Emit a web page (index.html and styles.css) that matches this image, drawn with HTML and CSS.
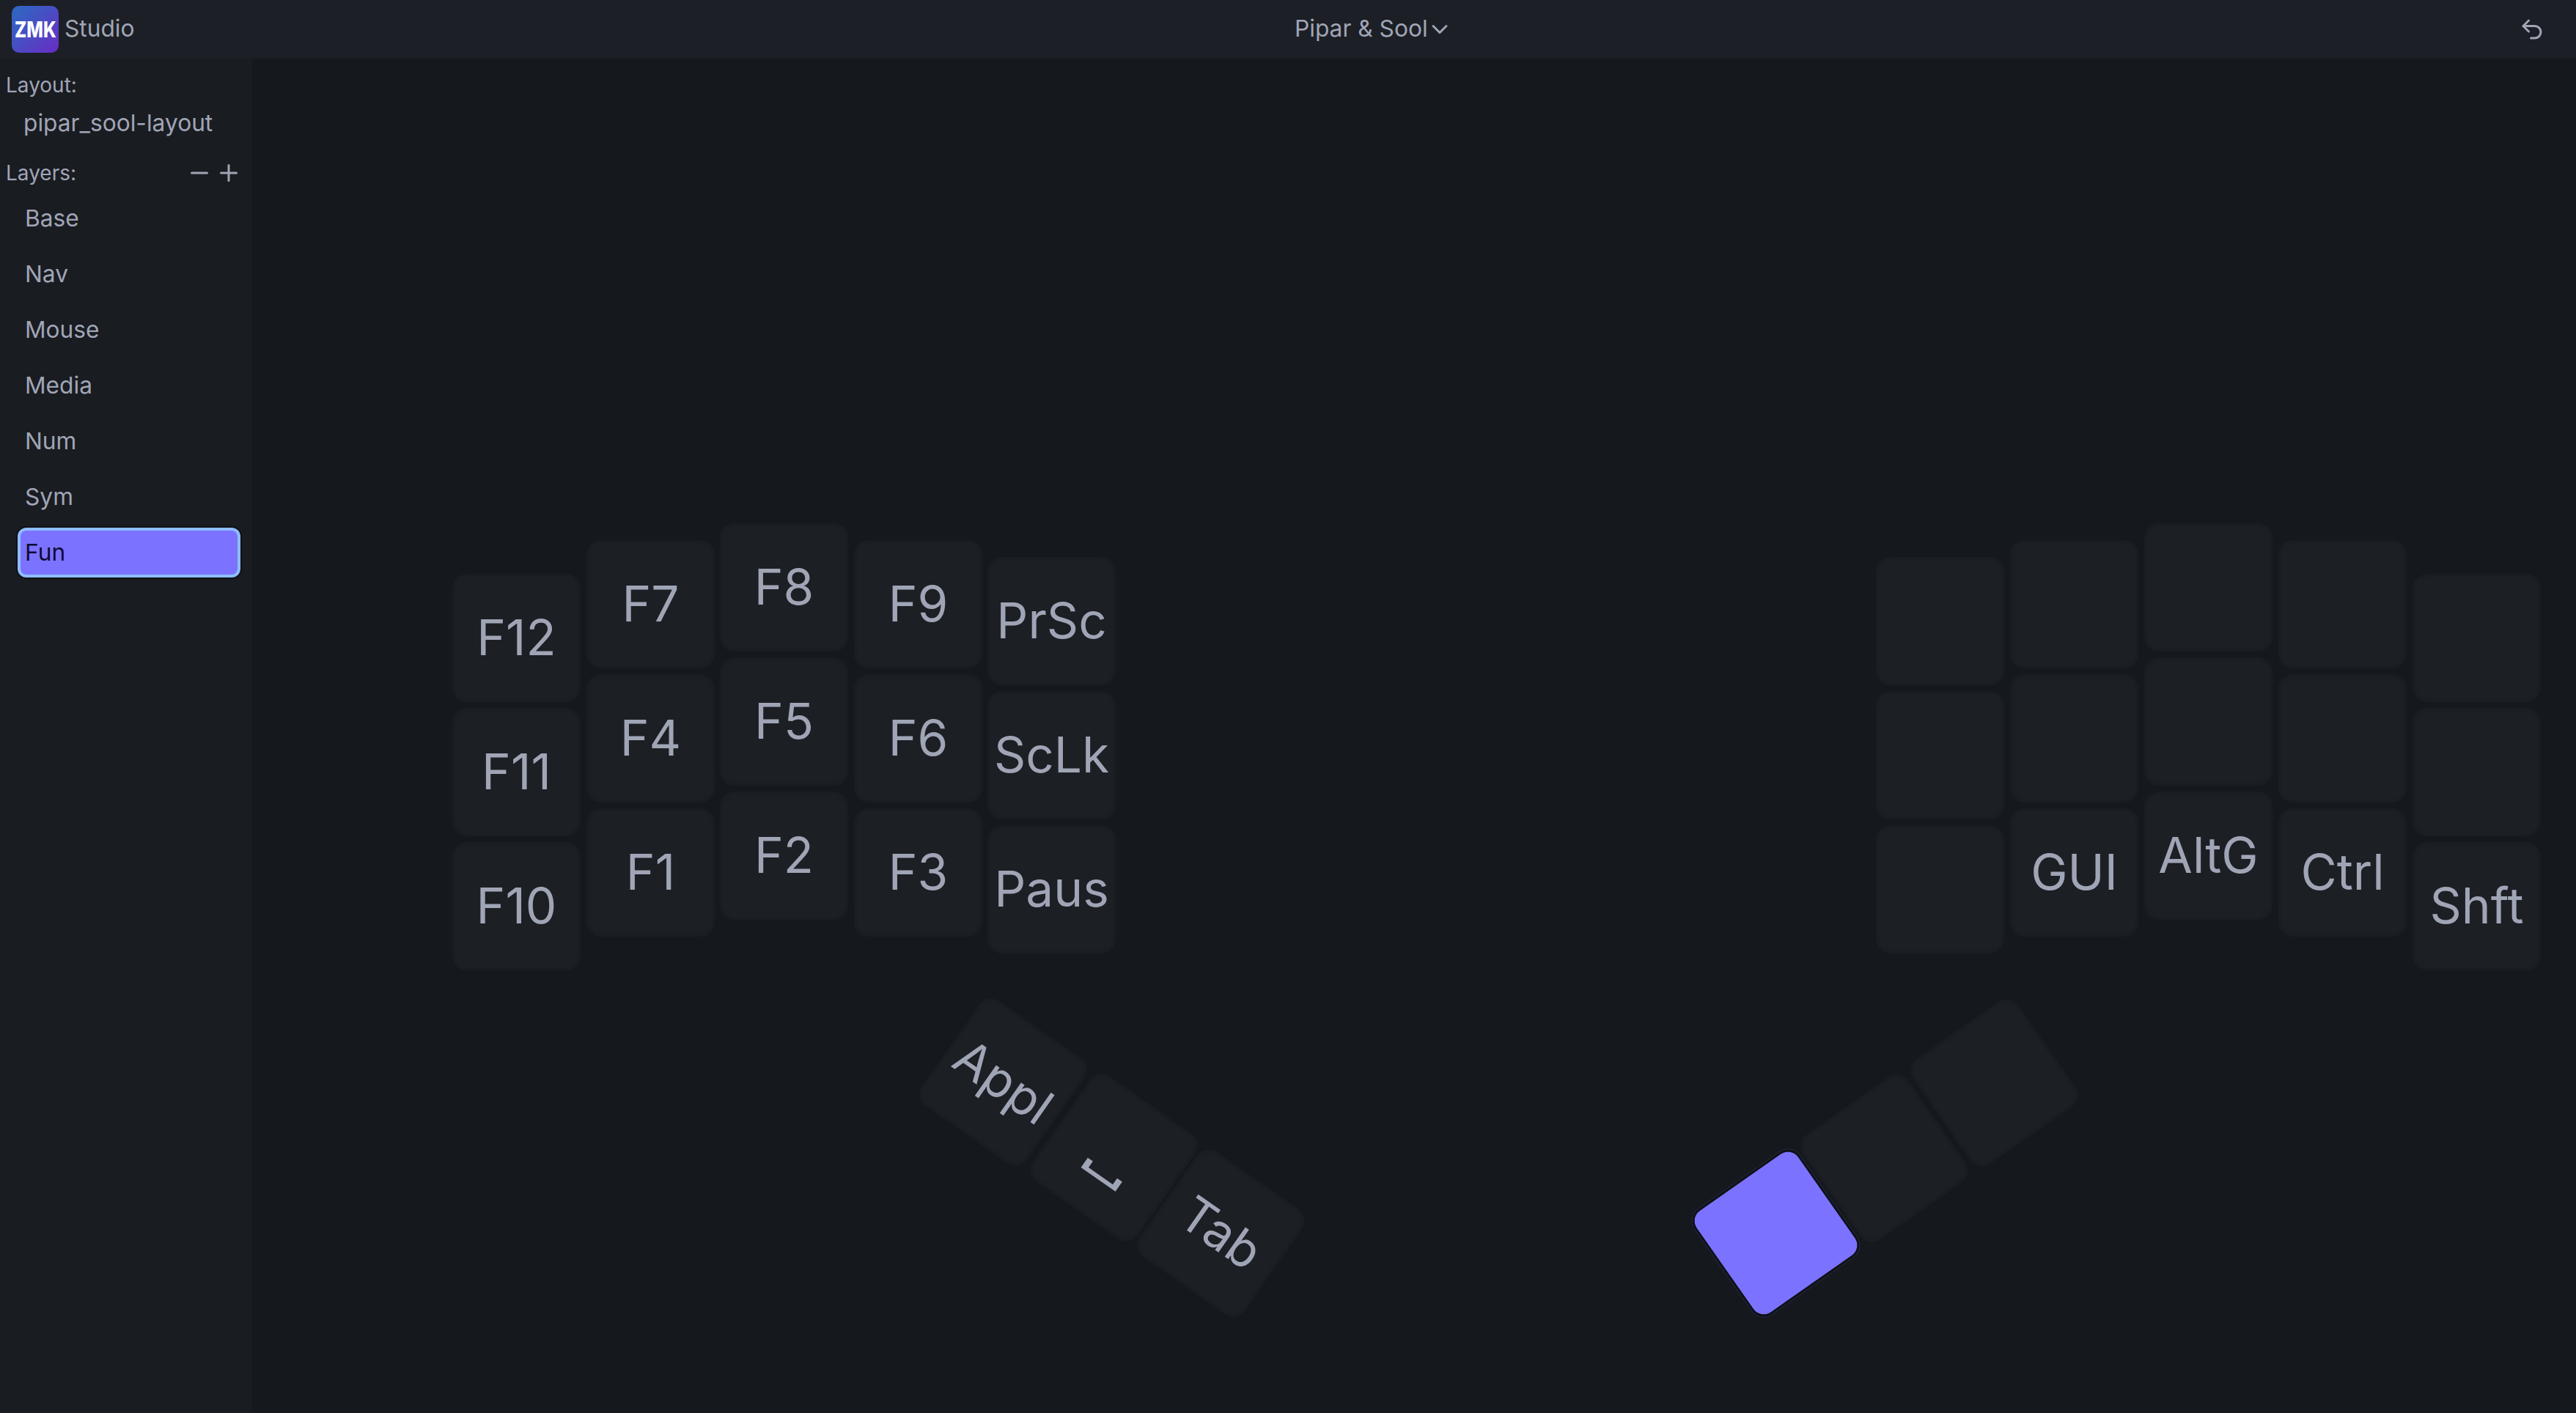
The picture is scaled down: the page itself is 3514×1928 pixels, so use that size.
FILE: index.html
```html
<!DOCTYPE html>
<html lang="en">
<head>
    <meta charset="UTF-8">
    <title>ZMK Studio</title>
    <link rel="stylesheet" href="styles.css">
</head>
<body>
    <header class="topbar">
        <div class="brand">
            <span class="logo"><span class="logo-text">ZMK</span></span>
            <span class="bar-text">Studio</span>
        </div>
        <div class="device">
            <span class="bar-text">Pipar &amp; Sool</span>
            <svg class="icon chevron" viewBox="0 0 24 24"><path d="m6 9 6 6 6-6"/></svg>
        </div>
        <div class="actions">
            <svg class="icon" viewBox="0 0 24 24"><path d="M9 14 4 9l5-5"/><path d="M4 9h10.5a5.5 5.5 0 0 1 0 11H11"/></svg>
        </div>
    </header>
    <div class="app">
        <aside class="sidebar">
            <div class="label">Layout:</div>
            <div class="layout-name">pipar_sool-layout</div>
            <div class="label layers-head">
                <span>Layers:</span>
                <span class="layer-btns">
                    <svg class="icon" viewBox="0 0 24 24"><path d="M5 12h14"/></svg>
                    <svg class="icon" viewBox="0 0 24 24"><path d="M5 12h14"/><path d="M12 5v14"/></svg>
                </span>
            </div>
            <ul class="layers">
                <li>Base</li>
                <li>Nav</li>
                <li>Mouse</li>
                <li>Media</li>
                <li>Num</li>
                <li>Sym</li>
                <li class="selected">Fun</li>
            </ul>
        </aside>
        <main class="canvas">
            <div class="keymap">
                <!-- left hand -->
                <div class="key" style="left:0;top:69px">F12</div>
                <div class="key" style="left:183px;top:23px">F7</div>
                <div class="key" style="left:365px;top:0">F8</div>
                <div class="key" style="left:548px;top:23px">F9</div>
                <div class="key" style="left:730px;top:46px">PrSc</div>
                <div class="key" style="left:0;top:252px">F11</div>
                <div class="key" style="left:183px;top:206px">F4</div>
                <div class="key" style="left:365px;top:183px">F5</div>
                <div class="key" style="left:548px;top:206px">F6</div>
                <div class="key" style="left:730px;top:229px">ScLk</div>
                <div class="key" style="left:0;top:435px">F10</div>
                <div class="key" style="left:183px;top:389px">F1</div>
                <div class="key" style="left:365px;top:366px">F2</div>
                <div class="key" style="left:548px;top:389px">F3</div>
                <div class="key" style="left:730px;top:412px">Paus</div>
                <!-- right hand -->
                <div class="key" style="left:1942px;top:46px"></div>
                <div class="key" style="left:2125px;top:23px"></div>
                <div class="key" style="left:2308px;top:0"></div>
                <div class="key" style="left:2491px;top:23px"></div>
                <div class="key" style="left:2674px;top:69px"></div>
                <div class="key" style="left:1942px;top:229px"></div>
                <div class="key" style="left:2125px;top:206px"></div>
                <div class="key" style="left:2308px;top:183px"></div>
                <div class="key" style="left:2491px;top:206px"></div>
                <div class="key" style="left:2674px;top:252px"></div>
                <div class="key" style="left:1942px;top:412px"></div>
                <div class="key" style="left:2125px;top:389px">GUI</div>
                <div class="key" style="left:2308px;top:366px">AltG</div>
                <div class="key" style="left:2491px;top:389px">Ctrl</div>
                <div class="key" style="left:2674px;top:435px">Shft</div>
                <!-- thumbs -->
                <div class="key thumb-l" style="left:664px;top:675px">Appl</div>
                <div class="key thumb-l" style="left:815px;top:778px"><span class="glyph">␣</span></div>
                <div class="key thumb-l" style="left:961px;top:881px">Tab</div>
                <div class="key thumb-r selected" style="left:1718px;top:881px"></div>
                <div class="key thumb-r" style="left:1866px;top:779px"></div>
                <div class="key thumb-r" style="left:2016px;top:676px"></div>
            </div>
        </main>
    </div>
</body>
</html>
```

FILE: styles.css
```css
* {
    box-sizing: border-box;
}

body {
    margin: 0;
    height: 1928px;
    overflow: hidden;
    background-color: #15181c;
    color: #a0a5b6;
    font-family: Inter, "Noto Sans", sans-serif;
    font-size: 31.7px;
    display: flex;
    flex-direction: column;
}

.icon {
    width: 36px;
    height: 36px;
    fill: none;
    stroke: currentColor;
    stroke-width: 2;
    stroke-linecap: round;
    stroke-linejoin: round;
}

/* top bar */
.topbar {
    height: 80px;
    flex: none;
    display: grid;
    grid-template-columns: 1750px auto 1fr;
    align-items: center;
    background-color: #1c1f25;
    padding: 0 42px 0 16px;
}

.brand {
    display: flex;
    align-items: center;
    gap: 8px;
}

.bar-text {
    padding-bottom: 3px;
}

.logo {
    width: 64px;
    height: 64px;
    border-radius: 10px;
    background: linear-gradient(135deg, #2a6bc2, #6a2cc4);
    color: #fff;
    display: flex;
    align-items: center;
    justify-content: center;
}

.logo-text {
    font-size: 30px;
    font-weight: 800;
    transform: scaleX(0.8);
}

.device {
    display: flex;
    align-items: center;
}

.chevron {
    margin-left: -2px;
}

.actions {
    display: flex;
    justify-content: flex-end;
}

/* sidebar */
.app {
    flex: 1;
    display: flex;
    min-height: 0;
}

.sidebar {
    width: 344px;
    flex: none;
    background-color: #191c21;
    padding: 16px 8px 0;
}

.label {
    font-size: 28px;
    line-height: 40px;
}

.layout-name {
    padding-left: 24px;
    margin-top: 12px;
    line-height: 40px;
}

.layers-head {
    display: flex;
    justify-content: space-between;
    align-items: center;
    margin-top: 28px;
    padding-right: 6px;
}

.layer-btns {
    display: flex;
    gap: 4px;
}

.layers {
    list-style: none;
    margin: 12px 0 0;
    padding: 0 12px 0 20px;
    display: flex;
    flex-direction: column;
    gap: 16px;
}

.layers li {
    height: 60px;
    line-height: 60px;
    padding-left: 6px;
    border-radius: 8px;
}

.layers li.selected {
    background-color: #7b73ff;
    color: #100a33;
    box-shadow: 0 0 0 4px #8fbdff, 0 0 0 6px #101216;
}

/* keys sit on a free canvas */
.canvas {
    flex: 1;
    padding: 634px 0 0 273px;
}

.keymap {
    position: relative;
}

.key {
    position: absolute;
    width: 175px;
    height: 175px;
    display: flex;
    align-items: center;
    justify-content: center;
    padding-bottom: 3px;
    background-color: #1c1f24;
    border: 4px solid #1a1d22;
    border-radius: 20px;
    font-size: 67.5px;
    font-weight: 420;
}

.key.selected {
    background-color: #7b73ff;
    background-clip: padding-box;
    border: 3px solid #101218;
    box-shadow: 0 0 0 1px #25264a;
}

/* the space mark is longer and flatter than the font draws it */
.glyph {
    font-size: 72px;
    font-weight: 400;
    transform: scaleX(1.38);
}

.thumb-l {
    transform: rotate(35deg);
}

.thumb-r {
    transform: rotate(-35deg);
}
```
